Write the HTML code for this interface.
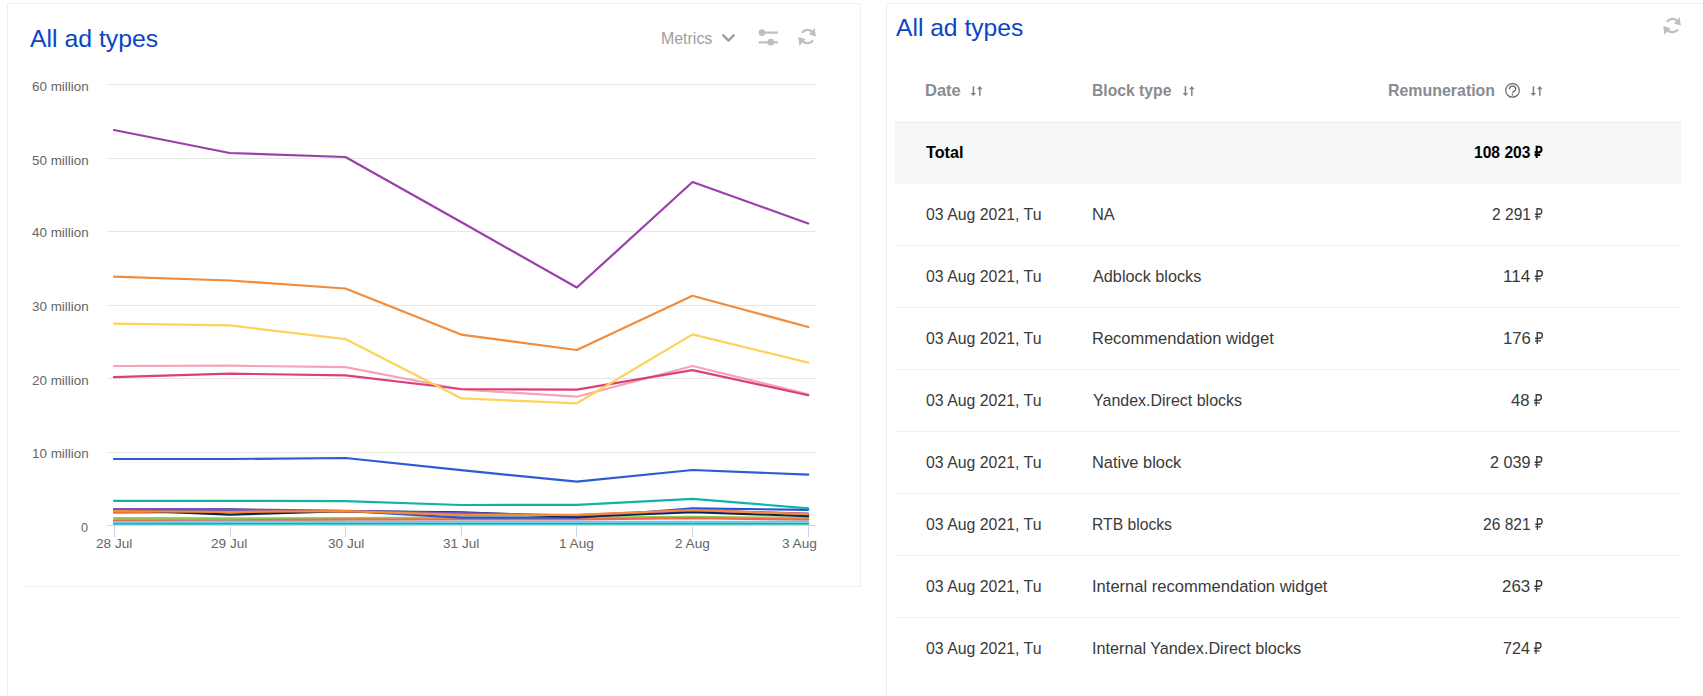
<!DOCTYPE html>
<html><head><meta charset="utf-8">
<style>
*{margin:0;padding:0;box-sizing:border-box}
html,body{width:1703px;height:696px;overflow:hidden;background:#fff;font-family:"Liberation Sans",sans-serif}
.abs{position:absolute}
.tx{position:absolute;white-space:nowrap;line-height:1;transform-origin:0 0}
.rub{display:inline-block;vertical-align:baseline;fill:none;stroke:currentColor;overflow:visible}
.row{position:absolute;left:895px;width:786px;height:1px;background:#f0f0f0}
svg text{font-family:"Liberation Sans",sans-serif}

</style></head><body>
<div class="abs" style="left:7px;top:3px;width:1px;height:693px;background:#efefef"></div>
<div class="abs" style="left:7px;top:3px;width:854px;height:1px;background:#efefef"></div>
<div class="abs" style="left:860px;top:3px;width:1px;height:584px;background:#efefef"></div>
<div class="abs" style="left:22px;top:586px;width:839px;height:1px;background:#efefef"></div>
<div class="abs" style="left:886px;top:3px;width:817px;height:1px;background:#efefef"></div>
<div class="abs" style="left:886px;top:3px;width:1px;height:693px;background:#efefef"></div>

<svg class="abs" style="left:720px;top:32px" width="17" height="12" viewBox="0 0 17 12"><path d="M2.55 2.6L8.45 8.5L14.35 2.6" fill="none" stroke="#9e9e9e" stroke-width="2.4"/></svg>
<svg class="abs" style="left:757px;top:27px" width="23" height="20" viewBox="0 0 23 20"><g fill="#bfbfbf"><rect x="4" y="4.5" width="17" height="2.2"/><circle cx="5" cy="5.6" r="3.4"/><rect x="1.7" y="14.3" width="19.3" height="2.2"/><circle cx="13.8" cy="15.2" r="3.4"/></g></svg>
<svg id="rf794" class="abs" style="left:794px;top:24px" width="28" height="26" viewBox="0 0 28 26"><g fill="none" stroke="#bfbfbf" stroke-width="2.3"><path d="M8.0 8.8A6.6 6.6 0 0 1 18.2 8.0"/><path d="M19.0 16.3A6.6 6.6 0 0 1 9.2 17.6"/></g><g fill="#bfbfbf"><path d="M20.6 4.0L21.9 12.4L15.0 10.5Z"/><path d="M4.2 13.1L11.7 15.2L5.4 21.7Z"/></g></svg>

<svg class="abs" style="left:0;top:0" width="1703" height="696">
<rect x="107" y="84" width="709" height="1" fill="#e6e6e6"/><rect x="107" y="158" width="709" height="1" fill="#e6e6e6"/><rect x="107" y="231" width="709" height="1" fill="#e6e6e6"/><rect x="107" y="305" width="709" height="1" fill="#e6e6e6"/><rect x="107" y="378" width="709" height="1" fill="#e6e6e6"/><rect x="107" y="452" width="709" height="1" fill="#e6e6e6"/>
<rect x="107" y="525" width="709" height="1" fill="#ccd6eb"/>
<rect x="114" y="525" width="1" height="12" fill="#ccd6eb"/><rect x="230" y="525" width="1" height="12" fill="#ccd6eb"/><rect x="345" y="525" width="1" height="12" fill="#ccd6eb"/><rect x="461" y="525" width="1" height="12" fill="#ccd6eb"/><rect x="576" y="525" width="1" height="12" fill="#ccd6eb"/><rect x="692" y="525" width="1" height="12" fill="#ccd6eb"/><rect x="808" y="525" width="1" height="12" fill="#ccd6eb"/>
<polyline points="114.0,523.7 229.7,523.7 345.4,523.7 461.1,523.7 576.8,523.7 692.5,523.7 808.2,523.7" fill="none" stroke="#10b4a4" stroke-width="2.2" stroke-linejoin="round" stroke-linecap="round"/><polyline points="114.0,518.1 229.7,518.3 345.4,518.0 461.1,517.6 576.8,517.5 692.5,516.8 808.2,517.9" fill="none" stroke="#8dcc52" stroke-width="2.2" stroke-linejoin="round" stroke-linecap="round"/><polyline points="114.0,520.4 229.7,520.3 345.4,519.6 461.1,519.4 576.8,519.4 692.5,518.2 808.2,519.6" fill="none" stroke="#fa6442" stroke-width="2.2" stroke-linejoin="round" stroke-linecap="round"/><polyline points="114.0,522.2 229.7,521.7 345.4,521.8 461.1,521.8 576.8,521.8 692.5,521.8 808.2,521.7" fill="none" stroke="#6ccaf5" stroke-width="2.2" stroke-linejoin="round" stroke-linecap="round"/><polyline points="114.0,512.6 229.7,512.0 345.4,511.5 461.1,514.9 576.8,515.0 692.5,510.2 808.2,514.3" fill="none" stroke="#f95c35" stroke-width="2.2" stroke-linejoin="round" stroke-linecap="round"/><polyline points="114.0,510.5 229.7,510.5 345.4,511.0 461.1,517.6 576.8,517.6 692.5,508.4 808.2,509.8" fill="none" stroke="#2853d8" stroke-width="2.2" stroke-linejoin="round" stroke-linecap="round"/><polyline points="114.0,509.6 229.7,514.7 345.4,511.1 461.1,512.3 576.8,516.8 692.5,512.1 808.2,516.1" fill="none" stroke="#0d2356" stroke-width="2.2" stroke-linejoin="round" stroke-linecap="round"/><polyline points="114.0,509.0 229.7,509.2 345.4,510.8 461.1,513.0 576.8,515.5 692.5,510.5 808.2,513.5" fill="none" stroke="#7a4fc0" stroke-width="2.2" stroke-linejoin="round" stroke-linecap="round"/><polyline points="114.0,511.1 229.7,511.8 345.4,511.2 461.1,514.9 576.8,514.9 692.5,510.0 808.2,514.1" fill="none" stroke="#f78c32" stroke-width="2.2" stroke-linejoin="round" stroke-linecap="round"/><polyline points="114.0,500.9 229.7,500.9 345.4,501.2 461.1,505.0 576.8,504.9 692.5,498.8 808.2,508.3" fill="none" stroke="#10b4a4" stroke-width="2.2" stroke-linejoin="round" stroke-linecap="round"/><polyline points="114.0,459.0 229.7,459.0 345.4,458.0 461.1,470.2 576.8,481.7 692.5,470.0 808.2,474.6" fill="none" stroke="#2f5ad5" stroke-width="2.2" stroke-linejoin="round" stroke-linecap="round"/><polyline points="114.0,366.0 229.7,365.7 345.4,367.1 461.1,389.5 576.8,396.7 692.5,366.0 808.2,394.2" fill="none" stroke="#f7a3b3" stroke-width="2.2" stroke-linejoin="round" stroke-linecap="round"/><polyline points="114.0,377.2 229.7,373.6 345.4,375.4 461.1,389.0 576.8,389.7 692.5,370.1 808.2,395.2" fill="none" stroke="#dc3f7d" stroke-width="2.2" stroke-linejoin="round" stroke-linecap="round"/><polyline points="114.0,323.6 229.7,325.4 345.4,339.1 461.1,398.3 576.8,403.3 692.5,334.4 808.2,362.6" fill="none" stroke="#fdd25a" stroke-width="2.2" stroke-linejoin="round" stroke-linecap="round"/><polyline points="114.0,276.7 229.7,280.5 345.4,288.5 461.1,334.6 576.8,350.0 692.5,295.7 808.2,327.0" fill="none" stroke="#f08c3c" stroke-width="2.2" stroke-linejoin="round" stroke-linecap="round"/><polyline points="114.0,130.0 229.7,153.0 345.4,157.0 461.1,222.0 576.8,287.5 692.5,182.0 808.2,223.5" fill="none" stroke="#9b3fab" stroke-width="2.2" stroke-linejoin="round" stroke-linecap="round"/>
</svg>

<svg id="rf1659" class="abs" style="left:1659.3px;top:12.9px" width="28" height="26" viewBox="0 0 28 26"><g fill="none" stroke="#bfbfbf" stroke-width="2.3"><path d="M8.0 8.8A6.6 6.6 0 0 1 18.2 8.0"/><path d="M19.0 16.3A6.6 6.6 0 0 1 9.2 17.6"/></g><g fill="#bfbfbf"><path d="M20.6 4.0L21.9 12.4L15.0 10.5Z"/><path d="M4.2 13.1L11.7 15.2L5.4 21.7Z"/></g></svg>

<div class="abs" style="left:895px;top:122px;width:786px;height:62px;background:#f6f7f9;border-top:1px solid #ececec"></div>
<div class="row" style="top:245px"></div><div class="row" style="top:307px"></div><div class="row" style="top:369px"></div><div class="row" style="top:431px"></div><div class="row" style="top:493px"></div><div class="row" style="top:555px"></div><div class="row" style="top:617px"></div>

<svg class="abs" style="left:969.3px;top:85px" width="14" height="12" viewBox="0 0 14 12"><g fill="#7f8388"><rect x="3.65" y="1.2" width="1.5" height="7.2"/><path d="M1.6 7.9H7.2L4.4 10.9Z"/><rect x="10.05" y="3.8" width="1.5" height="7.0"/><path d="M8.0 4.3H13.6L10.8 1.1Z"/></g></svg>
<svg class="abs" style="left:1180.7px;top:85px" width="14" height="12" viewBox="0 0 14 12"><g fill="#7f8388"><rect x="3.65" y="1.2" width="1.5" height="7.2"/><path d="M1.6 7.9H7.2L4.4 10.9Z"/><rect x="10.05" y="3.8" width="1.5" height="7.0"/><path d="M8.0 4.3H13.6L10.8 1.1Z"/></g></svg>
<svg class="abs" style="left:1528.6px;top:85px" width="14" height="12" viewBox="0 0 14 12"><g fill="#7f8388"><rect x="3.65" y="1.2" width="1.5" height="7.2"/><path d="M1.6 7.9H7.2L4.4 10.9Z"/><rect x="10.05" y="3.8" width="1.5" height="7.0"/><path d="M8.0 4.3H13.6L10.8 1.1Z"/></g></svg>
<svg class="abs" style="left:1503px;top:81px" width="19" height="19" viewBox="0 0 19 19"><circle cx="9.5" cy="9.4" r="6.8" fill="none" stroke="#666" stroke-width="1.2"/><path d="M6.4 8.3C6.4 6.3 7.8 5.2 9.5 5.2C11.3 5.2 12.7 6.3 12.7 7.9C12.7 9.5 11.2 10.1 10.3 10.9C9.8 11.3 9.5 11.7 9.5 12.3" fill="none" stroke="#666" stroke-width="1.3"/><rect x="8.8" y="13.1" width="1.4" height="1.4" fill="#666"/></svg>

<div id="t1" class="tx" style="left:30.40px;top:27.44px;font-size:24.8px;font-weight:normal;color:#0a45c6;transform:scaleX(1.0001)">All ad types</div>
<div id="t2" class="tx" style="left:896.00px;top:15.74px;font-size:24.8px;font-weight:normal;color:#0a45c6;transform:scaleX(0.9923)">All ad types</div>
<div id="met" class="tx" style="left:660.98px;top:31.46px;font-size:16px;font-weight:normal;color:#9e9e9e;transform:scaleX(0.9950)">Metrics</div>
<div id="y0" class="tx" style="left:32.01px;top:79.87px;font-size:13.5px;font-weight:normal;color:#666666;transform:scaleX(0.9933)">60 million</div>
<div id="y1" class="tx" style="left:31.98px;top:153.87px;font-size:13.5px;font-weight:normal;color:#666666;transform:scaleX(0.9933)">50 million</div>
<div id="y2" class="tx" style="left:31.98px;top:225.87px;font-size:13.5px;font-weight:normal;color:#666666;transform:scaleX(0.9933)">40 million</div>
<div id="y3" class="tx" style="left:31.98px;top:299.87px;font-size:13.5px;font-weight:normal;color:#666666;transform:scaleX(0.9933)">30 million</div>
<div id="y4" class="tx" style="left:31.98px;top:373.87px;font-size:13.5px;font-weight:normal;color:#666666;transform:scaleX(0.9933)">20 million</div>
<div id="y5" class="tx" style="left:31.98px;top:446.87px;font-size:13.5px;font-weight:normal;color:#666666;transform:scaleX(0.9933)">10 million</div>
<div id="y6" class="tx" style="left:81.20px;top:521.37px;font-size:13.5px;font-weight:normal;color:#666666;transform:scaleX(0.9336)">0</div>
<div id="x0" class="tx" style="left:95.89px;top:536.57px;font-size:13.5px;font-weight:normal;color:#666666;transform:scaleX(1.0065)">28 Jul</div>
<div id="x1" class="tx" style="left:211.49px;top:536.57px;font-size:13.5px;font-weight:normal;color:#666666;transform:scaleX(1.0065)">29 Jul</div>
<div id="x2" class="tx" style="left:327.60px;top:536.57px;font-size:13.5px;font-weight:normal;color:#666666;transform:scaleX(1.0065)">30 Jul</div>
<div id="x3" class="tx" style="left:443.20px;top:536.57px;font-size:13.5px;font-weight:normal;color:#666666;transform:scaleX(1.0065)">31 Jul</div>
<div id="x4" class="tx" style="left:558.79px;top:536.57px;font-size:13.5px;font-weight:normal;color:#666666;transform:scaleX(1.0065)">1 Aug</div>
<div id="x5" class="tx" style="left:675.34px;top:536.57px;font-size:13.5px;font-weight:normal;color:#666666;transform:scaleX(1.0065)">2 Aug</div>
<div id="x6" class="tx" style="left:781.73px;top:536.57px;font-size:13.5px;font-weight:normal;color:#666666;transform:scaleX(1.0065)">3 Aug</div>
<div id="h1" class="tx" style="left:924.69px;top:82.13px;font-size:16.5px;font-weight:bold;color:#888b90;transform:scaleX(1.0012)">Date</div>
<div id="h2" class="tx" style="left:1091.93px;top:82.13px;font-size:16.5px;font-weight:bold;color:#888b90;transform:scaleX(0.9512)">Block type</div>
<div id="h3" class="tx" style="left:1387.99px;top:82.23px;font-size:16.5px;font-weight:bold;color:#888b90;transform:scaleX(0.9651)">Remuneration</div>
<div id="tot" class="tx" style="left:925.71px;top:143.63px;font-size:16.5px;font-weight:bold;color:#000;transform:scaleX(0.9789)">Total</div>
<div id="totv" class="tx" style="left:1473.87px;top:143.83px;font-size:16.5px;font-weight:bold;color:#000;transform:scaleX(0.9466)">108 203 <svg class="rub" width="8" height="12" viewBox="0 0 8 12" style="stroke-width:2.1"><path d="M2.2 12V0.7H4.6A2.75 2.75 0 0 1 4.6 6.2H0M0 8.9H6"/></svg></div>
<div id="r0a" class="tx" style="left:925.82px;top:206.96px;font-size:16.7px;font-weight:normal;color:#3a3a3a;transform:scaleX(0.9501)">03 Aug 2021, Tu</div>
<div id="r0b" class="tx" style="left:1092.04px;top:206.96px;font-size:16.7px;font-weight:normal;color:#3a3a3a;transform:scaleX(0.9850)">NA</div>
<div id="r0c" class="tx" style="left:1492.26px;top:206.96px;font-size:16.7px;font-weight:normal;color:#3a3a3a;transform:scaleX(0.9335)">2 291 <svg class="rub" width="8" height="12" viewBox="0 0 8 12" style="stroke-width:1.35"><path d="M2.2 12V0.7H4.6A2.75 2.75 0 0 1 4.6 6.2H0M0 8.9H6"/></svg></div>
<div id="r1a" class="tx" style="left:925.82px;top:268.96px;font-size:16.7px;font-weight:normal;color:#3a3a3a;transform:scaleX(0.9501)">03 Aug 2021, Tu</div>
<div id="r1b" class="tx" style="left:1093.00px;top:268.96px;font-size:16.7px;font-weight:normal;color:#3a3a3a;transform:scaleX(0.9730)">Adblock blocks</div>
<div id="r1c" class="tx" style="left:1502.58px;top:268.96px;font-size:16.7px;font-weight:normal;color:#3a3a3a;transform:scaleX(1.0263)">114 <svg class="rub" width="8" height="12" viewBox="0 0 8 12" style="stroke-width:1.35"><path d="M2.2 12V0.7H4.6A2.75 2.75 0 0 1 4.6 6.2H0M0 8.9H6"/></svg></div>
<div id="r2a" class="tx" style="left:925.82px;top:330.96px;font-size:16.7px;font-weight:normal;color:#3a3a3a;transform:scaleX(0.9501)">03 Aug 2021, Tu</div>
<div id="r2b" class="tx" style="left:1092.01px;top:330.96px;font-size:16.7px;font-weight:normal;color:#3a3a3a;transform:scaleX(0.9897)">Recommendation widget</div>
<div id="r2c" class="tx" style="left:1502.60px;top:330.96px;font-size:16.7px;font-weight:normal;color:#3a3a3a;transform:scaleX(1.0007)">176 <svg class="rub" width="8" height="12" viewBox="0 0 8 12" style="stroke-width:1.35"><path d="M2.2 12V0.7H4.6A2.75 2.75 0 0 1 4.6 6.2H0M0 8.9H6"/></svg></div>
<div id="r3a" class="tx" style="left:925.82px;top:392.96px;font-size:16.7px;font-weight:normal;color:#3a3a3a;transform:scaleX(0.9501)">03 Aug 2021, Tu</div>
<div id="r3b" class="tx" style="left:1093.00px;top:392.96px;font-size:16.7px;font-weight:normal;color:#3a3a3a;transform:scaleX(0.9585)">Yandex.Direct blocks</div>
<div id="r3c" class="tx" style="left:1510.61px;top:392.96px;font-size:16.7px;font-weight:normal;color:#3a3a3a;transform:scaleX(1.0012)">48 <svg class="rub" width="8" height="12" viewBox="0 0 8 12" style="stroke-width:1.35"><path d="M2.2 12V0.7H4.6A2.75 2.75 0 0 1 4.6 6.2H0M0 8.9H6"/></svg></div>
<div id="r4a" class="tx" style="left:925.82px;top:454.96px;font-size:16.7px;font-weight:normal;color:#3a3a3a;transform:scaleX(0.9501)">03 Aug 2021, Tu</div>
<div id="r4b" class="tx" style="left:1092.04px;top:454.96px;font-size:16.7px;font-weight:normal;color:#3a3a3a;transform:scaleX(0.9822)">Native block</div>
<div id="r4c" class="tx" style="left:1490.23px;top:454.96px;font-size:16.7px;font-weight:normal;color:#3a3a3a;transform:scaleX(0.9706)">2 039 <svg class="rub" width="8" height="12" viewBox="0 0 8 12" style="stroke-width:1.35"><path d="M2.2 12V0.7H4.6A2.75 2.75 0 0 1 4.6 6.2H0M0 8.9H6"/></svg></div>
<div id="r5a" class="tx" style="left:925.82px;top:516.96px;font-size:16.7px;font-weight:normal;color:#3a3a3a;transform:scaleX(0.9501)">03 Aug 2021, Tu</div>
<div id="r5b" class="tx" style="left:1092.06px;top:516.96px;font-size:16.7px;font-weight:normal;color:#3a3a3a;transform:scaleX(0.9405)">RTB blocks</div>
<div id="r5c" class="tx" style="left:1482.85px;top:516.96px;font-size:16.7px;font-weight:normal;color:#3a3a3a;transform:scaleX(0.9339)">26 821 <svg class="rub" width="8" height="12" viewBox="0 0 8 12" style="stroke-width:1.35"><path d="M2.2 12V0.7H4.6A2.75 2.75 0 0 1 4.6 6.2H0M0 8.9H6"/></svg></div>
<div id="r6a" class="tx" style="left:925.82px;top:578.96px;font-size:16.7px;font-weight:normal;color:#3a3a3a;transform:scaleX(0.9501)">03 Aug 2021, Tu</div>
<div id="r6b" class="tx" style="left:1092.01px;top:578.96px;font-size:16.7px;font-weight:normal;color:#3a3a3a;transform:scaleX(0.9916)">Internal recommendation widget</div>
<div id="r6c" class="tx" style="left:1502.20px;top:578.96px;font-size:16.7px;font-weight:normal;color:#3a3a3a;transform:scaleX(1.0106)">263 <svg class="rub" width="8" height="12" viewBox="0 0 8 12" style="stroke-width:1.35"><path d="M2.2 12V0.7H4.6A2.75 2.75 0 0 1 4.6 6.2H0M0 8.9H6"/></svg></div>
<div id="r7a" class="tx" style="left:925.82px;top:640.96px;font-size:16.7px;font-weight:normal;color:#3a3a3a;transform:scaleX(0.9501)">03 Aug 2021, Tu</div>
<div id="r7b" class="tx" style="left:1092.03px;top:640.96px;font-size:16.7px;font-weight:normal;color:#3a3a3a;transform:scaleX(0.9703)">Internal Yandex.Direct blocks</div>
<div id="r7c" class="tx" style="left:1503.04px;top:640.96px;font-size:16.7px;font-weight:normal;color:#3a3a3a;transform:scaleX(0.9655)">724 <svg class="rub" width="8" height="12" viewBox="0 0 8 12" style="stroke-width:1.35"><path d="M2.2 12V0.7H4.6A2.75 2.75 0 0 1 4.6 6.2H0M0 8.9H6"/></svg></div>
</body></html>
